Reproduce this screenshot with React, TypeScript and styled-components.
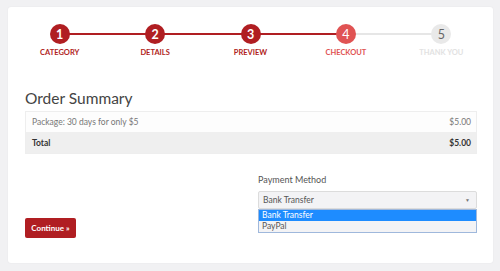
import React from "react";
import styled, { createGlobalStyle, css } from "styled-components";

type StepState = "done" | "current" | "todo";

const steps: { label: string; state: StepState }[] = [
  { label: "Category", state: "done" },
  { label: "Details", state: "done" },
  { label: "Preview", state: "done" },
  { label: "Checkout", state: "current" },
  { label: "Thank You", state: "todo" },
];

const GlobalStyle = createGlobalStyle`
  html, body {
    margin: 0;
    padding: 0;
    background: #f1f1f3;
    font-family: Lato, "Open Sans", Arial, sans-serif;
  }
`;

const Page = styled.div`
  padding: 7px 7px 8px 8px;
`;

const Card = styled.div`
  background: #fff;
  border-radius: 3px;
  box-shadow: 0 0 2px rgba(0, 0, 0, 0.06);
  padding: 17px 16px 24px 17px;
  height: 256px;
  box-sizing: border-box;
`;

const Steps = styled.div`
  display: flex;
  margin: 0 -12px 0 -13px;
`;

const circleColors = {
  done: css`
    background: #b01e22;
    color: #fff;
    font-weight: 700;
  `,
  current: css`
    background: #e05353;
    color: #fff;
    font-weight: 400;
  `,
  todo: css`
    background: #e9e9e9;
    color: #666;
    font-weight: 400;
  `,
};

const labelColors: Record<StepState, string> = {
  done: "#b01e22",
  current: "#e05353",
  todo: "#e2e2e2",
};

const Step = styled.div<{ $state: StepState; $first: boolean }>`
  flex: 1;
  position: relative;
  display: flex;
  flex-direction: column;
  align-items: center;

  ${(p) =>
    !p.$first &&
    css`
      &::before {
        content: "";
        position: absolute;
        top: 9px;
        left: -50%;
        width: 100%;
        height: 2px;
        background: ${p.$state === "todo" ? "#e6e6e6" : "#b01e22"};
        z-index: 0;
      }
    `}
`;

const Circle = styled.div<{ $state: StepState }>`
  position: relative;
  z-index: 1;
  width: 20px;
  height: 20px;
  border-radius: 50%;
  display: flex;
  align-items: center;
  justify-content: center;
  font-size: 12.5px;
  ${(p) => circleColors[p.$state]}
`;

const StepLabel = styled.div<{ $state: StepState }>`
  margin-top: 4px;
  font-size: 7.5px;
  line-height: 10px;
  font-weight: 700;
  text-transform: uppercase;
  color: ${(p) => labelColors[p.$state]};
`;

const Title = styled.h2`
  margin: 31px 0 4px;
  font-size: 15.5px;
  line-height: 18px;
  font-weight: 400;
  color: #444;
`;

const Table = styled.div`
  border: 1px solid #eeeeee;
  font-size: 8.5px;
`;

const Row = styled.div<{ $total?: boolean }>`
  display: flex;
  justify-content: space-between;
  align-items: center;
  height: ${(p) => (p.$total ? 21 : 20)}px;
  padding: 0 5px 0 6px;
  background: ${(p) => (p.$total ? "#efefef" : "#fdfdfd")};
  color: ${(p) => (p.$total ? "#333" : "#777")};
  font-weight: ${(p) => (p.$total ? 700 : 400)};
`;

const FormRow = styled.div`
  display: grid;
  grid-template-columns: 1fr 1fr;
  column-gap: 14px;
  margin-top: 20px;
`;

const Field = styled.div`
  grid-column: 2;
  position: relative;
`;

const Label = styled.div`
  font-size: 9px;
  line-height: 12px;
  color: #555;
  margin-bottom: 5px;
`;

const Select = styled.div`
  height: 18px;
  box-sizing: border-box;
  border: 1px solid #dcdcdc;
  border-radius: 2px;
  background: #f3f3f5;
  display: flex;
  align-items: center;
  justify-content: space-between;
  padding: 0 6px 0 4px;
  font-size: 8.5px;
  color: #555;
`;

const Arrow = styled.span`
  font-size: 5px;
  color: #777;
`;

const Options = styled.div`
  position: absolute;
  left: 0;
  right: 0;
  top: 100%;
  border: 1px solid #9fb8dc;
  background: #f3f3f5;
  z-index: 2;
`;

const Option = styled.div<{ $active?: boolean }>`
  height: 11px;
  line-height: 11px;
  padding: 0 3px;
  font-size: 8.5px;
  background: ${(p) => (p.$active ? "#1e8cff" : "transparent")};
  color: ${(p) => (p.$active ? "#fff" : "#555")};
`;

const Button = styled.button`
  margin-top: 9px;
  height: 20px;
  width: 51px;
  padding: 0;
  border: none;
  border-radius: 2px;
  background: #b01e22;
  color: #fff;
  font-family: Lato, Arial, sans-serif;
  font-size: 8px;
  font-weight: 700;
  cursor: pointer;
`;

export default function App() {
  return (
    <Page>
      <GlobalStyle />
      <Card>
        <Steps>
          {steps.map((s, i) => (
            <Step key={s.label} $state={s.state} $first={i === 0}>
              <Circle $state={s.state}>{i + 1}</Circle>
              <StepLabel $state={s.state}>{s.label}</StepLabel>
            </Step>
          ))}
        </Steps>
        <Title>Order Summary</Title>
        <Table>
          <Row>
            <span>Package: 30 days for only $5</span>
            <span>$5.00</span>
          </Row>
          <Row $total>
            <span>Total</span>
            <span>$5.00</span>
          </Row>
        </Table>
        <FormRow>
          <Field>
            <Label>Payment Method</Label>
            <Select>
              <span>Bank Transfer</span>
              <Arrow>▼</Arrow>
            </Select>
            <Options>
              <Option $active>Bank Transfer</Option>
              <Option>PayPal</Option>
            </Options>
          </Field>
        </FormRow>
        <Button>Continue »</Button>
      </Card>
    </Page>
  );
}
